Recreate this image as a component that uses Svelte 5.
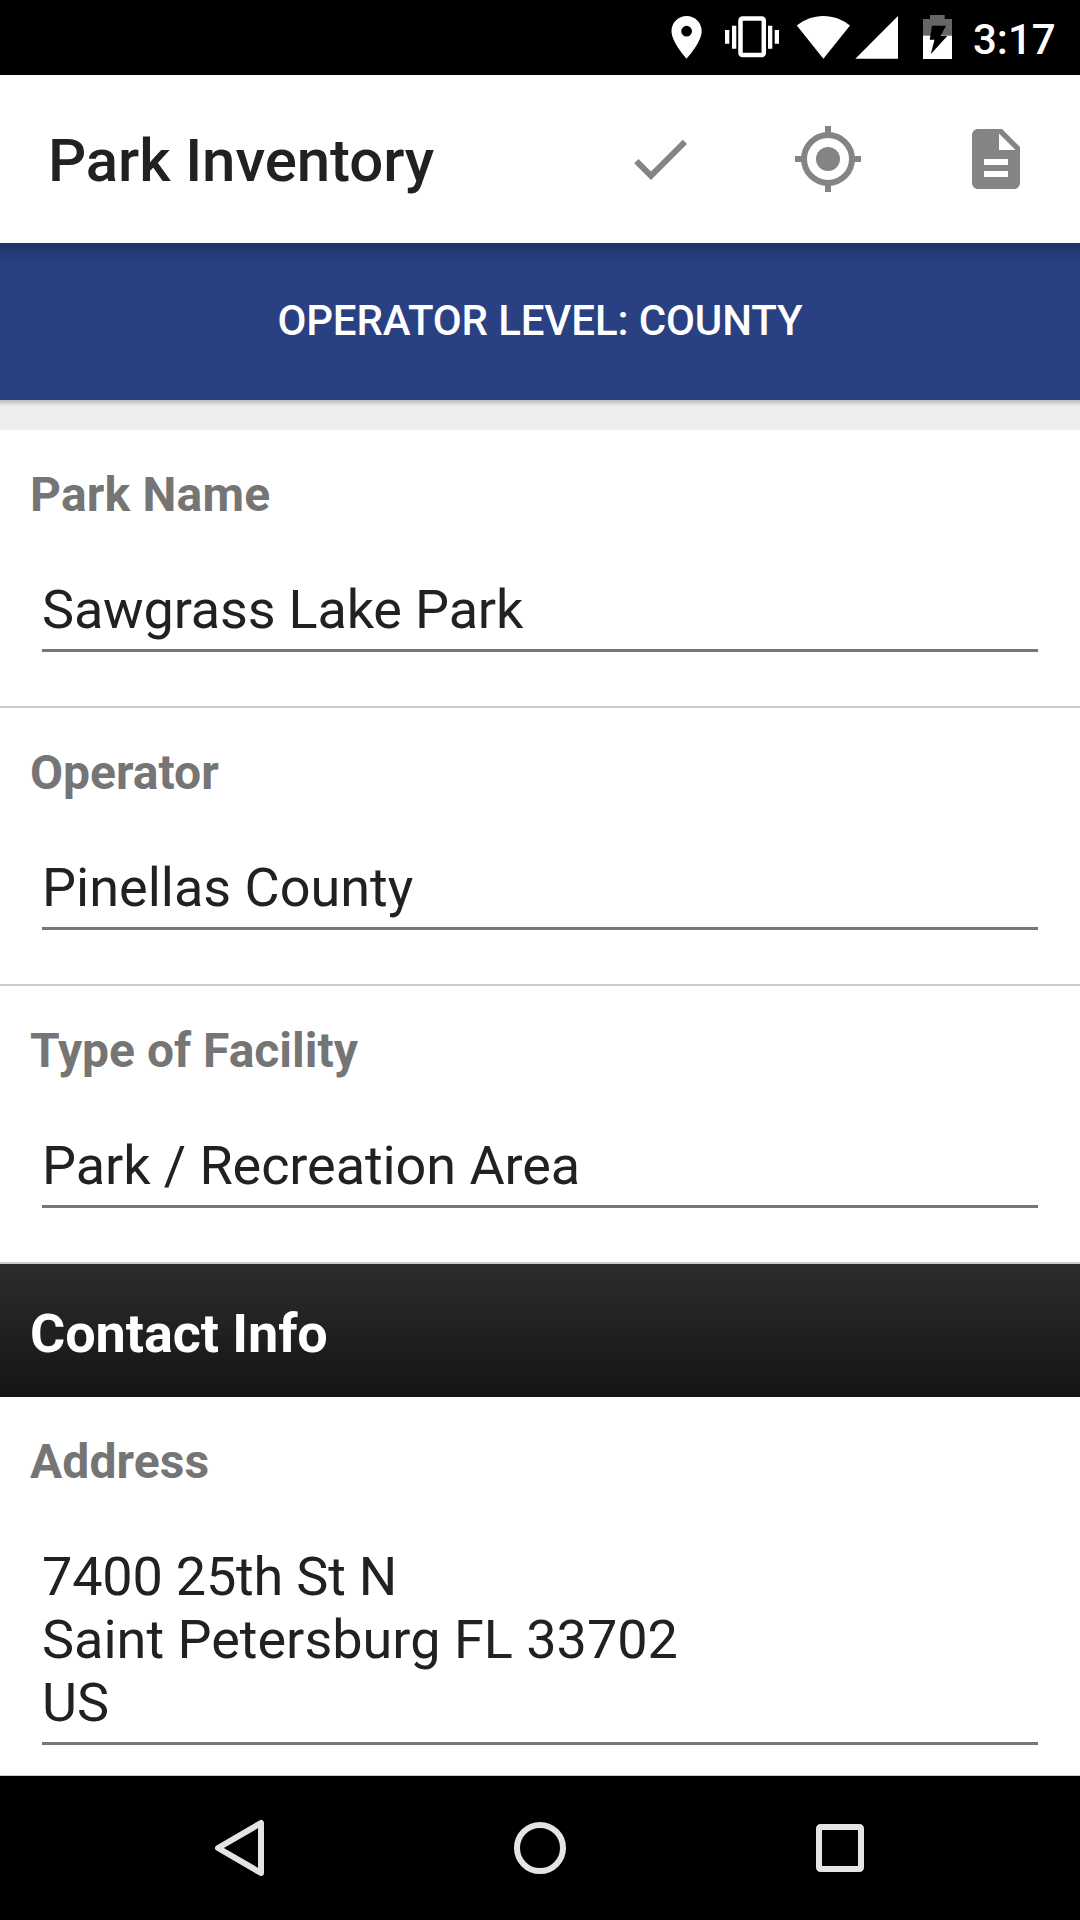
<script>
  const fields = [
    { id: 'name', label: 'Park Name', value: 'Sawgrass Lake Park' },
    { id: 'operator', label: 'Operator', value: 'Pinellas County' },
    { id: 'facility', label: 'Type of Facility', value: 'Park / Recreation Area' }
  ];
</script>

<div class="screen">
  <header class="status">
    <svg width="290" height="75" viewBox="665 0 290 75" fill="#fff" aria-hidden="true">
      <!-- location -->
      <path fill-rule="evenodd" d="M686.6 16c-8.4 0-15.1 6.7-15.1 15 0 11.2 15.1 27.7 15.1 27.7s15.1-16.500 15.1-27.7c0-8.300-6.700-15-15.100-15zm0 9.800a5.400 5.400 0 1 1 0 10.800 5.400 5.400 0 0 1 0-10.800z" />
      <!-- vibrate -->
      <rect x="740.5" y="18.600" width="23.300" height="36.500" rx="2" fill="none" stroke="#fff" stroke-width="4.500" />
      <path d="M732 25.700h4.300v23H732zM725 30h4.300v13.700H725zM768 25.700h4.300v23H768zM774.700 30h4.300v13.700h-4.300z" />
      <!-- wifi and signal -->
      <path d="M823.400 58.800L796.800 25.500C804 19.800 813.500 16 823.400 16s19.400 3.800 26.600 9.500z" />
      <path d="M855.300 58.800H898V16z" />
      <!-- battery -->
      <path fill="#666" d="M923 36V19h7v-4h14.700v4H952v17z" />
      <path d="M923 35.700h29V59h-29z" />
      <path fill="#000" d="M932 25.700h14L940.500 36h6.800L930.700 54.300l3.800-14.500h-4.800z" />
    </svg>
    <span>3:17</span>
  </header>

  <div class="appbar">
    <h1>Park Inventory</h1>
    <div class="actions">
      <svg viewBox="0 0 24 24"><path d="M9 16.170L4.830 12l-1.420 1.410L9 19 21 7l-1.410-1.410z" /></svg>
      <svg viewBox="0 0 24 24">
        <circle cx="12" cy="12" r="4" />
        <circle class="ring" cx="12" cy="12" r="8" />
        <path d="M11 1h2v2.500h-2zM11 20.500h2V23h-2zM1 11h2.500v2H1zM20.500 11H23v2h-2.500z" />
      </svg>
      <svg viewBox="0 0 24 24"><path d="M14 2H6c-1.100 0-1.990.9-1.990 2L4 20c0 1.100.89 2 1.990 2H18c1.100 0 2-.9 2-2V8l-6-6zm2 16H8v-2h8v2zm0-4H8v-2h8v2zm-3-5V3.500L18.500 9H13z" /></svg>
    </div>
  </div>

  <div class="banner">OPERATOR LEVEL: COUNTY</div>
  <div class="gap"></div>

  <main>
    {#each fields as f}
      <section class={f.id}><h2>{f.label}</h2><p>{f.value}</p></section>
    {/each}
    <div class="heading">Contact Info</div>
    <section class="address"><h2>Address</h2><p><span class="street">7400 25th St N</span><br />Saint Petersburg FL 33702<br />US</p></section>
  </main>

  <nav>
    <svg viewBox="0 0 72 72"><path d="M57 11v50L14 36z" /></svg>
    <svg viewBox="0 0 72 72"><circle cx="36" cy="36" r="23" /></svg>
    <svg viewBox="0 0 72 72"><rect x="15" y="15" width="42" height="42" rx="1.500" /></svg>
  </nav>
</div>

<style>
  :global(body) { background: #fff; }
  .screen { width: 1080px; height: 1920px; overflow: hidden; display: flex; flex-direction: column; font-family: Roboto, sans-serif; color: #212121; }
  .status { height: 75px; box-sizing: border-box; background: #000; color: #fff; display: flex; justify-content: flex-end; align-items: center; gap: 18px; padding-right: 24px; font-size: 42px; font-weight: 500; flex: none; }
  .status svg { display: block; flex: none; }
  .status span { width: 83px; padding-top: 4px; white-space: nowrap; }
  .appbar { height: 168px; box-sizing: border-box; display: flex; align-items: center; justify-content: space-between; padding: 0 48px; flex: none; }
  h1 { margin: 0; padding-top: 3px; font-size: 60px; font-weight: 500; letter-spacing: -0.1px; }
  .actions { display: flex; gap: 96px; }
  .actions svg { width: 72px; height: 72px; fill: #848484; }
  .actions .ring { fill: none; stroke: #848484; stroke-width: 2; }
  .banner { height: 157px; box-sizing: border-box; padding-bottom: 2px; background: linear-gradient(#1f3564, #294083 20px); color: #fff; font-size: 42px; font-weight: 500; letter-spacing: -0.13px; display: flex; align-items: center; justify-content: center; flex: none; }
  .gap { height: 30px; background: linear-gradient(#b9b9b9, #ededed 6px); flex: none; }
  main { flex: 1; min-height: 0; overflow: hidden; }
  section { height: 278px; box-sizing: border-box; border-bottom: 2px solid #ccc; padding: 37px 42px 0 30px; }
  h2 { margin: 0; font-size: 48px; line-height: 56px; font-weight: 700; color: #757575; }
  p { margin: 55px 0 0 12px; font-size: 54px; line-height: 63px; border-bottom: 3px solid #777; padding-bottom: 8px; }
  .name h2 { letter-spacing: 0.2px; }
  .name p { letter-spacing: -0.17px; }
  .facility p { letter-spacing: -0.07px; }
  .heading { height: 133px; box-sizing: border-box; background: linear-gradient(#2c2c2c, #151515); color: #fff; font-size: 54px; font-weight: 700; letter-spacing: -0.1px; padding: 5px 0 0 30px; display: flex; align-items: center; }
  .address { height: 380px; }
  .address h2 { letter-spacing: 0.1px; }
  .street { letter-spacing: -0.2px; }
  nav { height: 144px; background: #000; display: flex; justify-content: center; align-items: center; gap: 228px; flex: none; }
  nav svg { width: 72px; height: 72px; fill: none; stroke: #e4e4e4; stroke-width: 6; stroke-linejoin: round; }
</style>
